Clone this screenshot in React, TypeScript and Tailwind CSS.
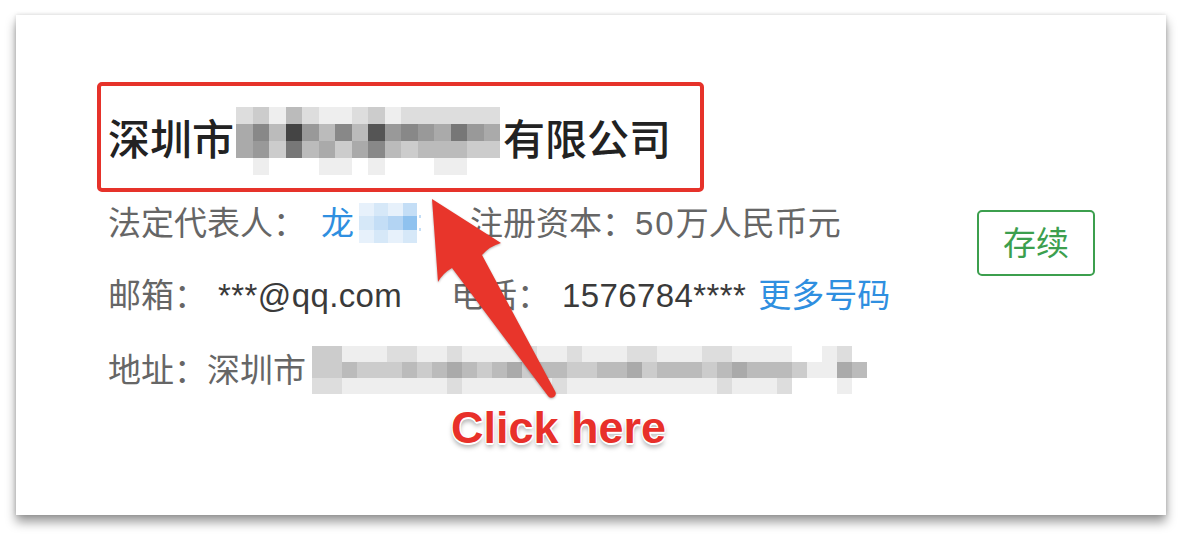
import type { ReactNode } from 'react'

const gray = (c: string) => `#${c.repeat(6)}`

const blue: Record<string, string> = {
  '0': '#e7f1fb',
  '1': '#d6e8f8',
  '2': '#c4def6',
  '3': '#8fc2ef',
  '4': '#b3d4f3',
}

function Mosaic({
  rows,
  cols,
  className,
  color = gray,
}: {
  rows: string[]
  cols: number
  className: string
  color?: (c: string) => string
}) {
  const cells = rows.flatMap((r) => r.padEnd(cols, 'e').slice(0, cols).split(''))
  return (
    <div className={`grid shrink-0 ${className}`}>
      {cells.map((c, i) => (
        <div key={i} style={{ backgroundColor: color(c) }} />
      ))}
    </div>
  )
}

const titleBlur = ['dcebdeedcedddddd', 'a8b49b8b5989a79a', 'a9c7baca8bcbbbcc', 'fefffeefefffeeff']

const addrBlur = [
  'cceeeddeedeeeedeedeeeddeeeddeeeeffedf',
  'ccbcccbcbabcbacbbccbbacbbbcbabbbceeab',
  'ddeeeeeeedeeeeeedeeeeeeeeeedeeedfffef',
]

const nameBlur = ['0102', '1243', '0101']

function Row({ children, className = '' }: { children: ReactNode; className?: string }) {
  return <div className={`flex items-center ${className}`}>{children}</div>
}

export default function App() {
  return (
    <div className="relative w-[1183px] h-[536px] bg-white pt-[15px] pl-[16px] font-['Liberation_Sans','Noto_Sans_CJK_SC',sans-serif]">
      <div className="w-[1150px] h-[500px] bg-white pt-[67px] pl-[81px] shadow-[0_7px_10px_rgba(0,0,0,0.4),0_0_4px_rgba(0,0,0,0.15)]">
        <div className="w-[607px] h-[110px] border-4 border-[#e6322a] rounded-[5px] flex items-center pl-[7px] pt-[8px]">
          <h1 className="flex items-center text-[42px] leading-none font-medium text-[#222]">
            <span>深圳市</span>
            <Mosaic rows={titleBlur} cols={16} className="ml-[2px] mr-[3px] w-[264px] h-[68px] grid-cols-16 grid-rows-4" />
            <span>有限公司</span>
          </h1>
        </div>

        <div className="flex ml-[11px] text-[33px] leading-none text-[#666]">
          <div className="flex flex-col pt-[9px]">
            <Row className="h-[44px]">
              <span>法定代表人：</span>
              <span className="ml-[15px] text-[#2f8fe0]">龙</span>
              <Mosaic
                rows={nameBlur}
                cols={4}
                color={(c) => blue[c]}
                className="ml-[5px] w-[58px] h-[40px] grid-cols-4 grid-rows-3"
              />
              <span className="ml-[2px] flex flex-col gap-[10px]">
                <span className="w-[2px] h-[3px] bg-[#c4def6]" />
                <span className="w-[2px] h-[3px] bg-[#c4def6]" />
              </span>
              <span className="ml-[49px]">
                注册资本：<span className="tracking-[2px]">50</span>万人民币元
              </span>
            </Row>
            <Row className="h-[44px] mt-[28px]">
              <span>邮箱：</span>
              <span className="ml-[11px] w-[233px] text-[#3a3a3a] tracking-[0.4px]">***@qq.com</span>
              <span>电话：</span>
              <span className="ml-[12px] text-[#3a3a3a] tracking-[0.4px]">1576784****</span>
              <span className="ml-[12px] text-[#2f8fe0]">更多号码</span>
            </Row>
            <Row className="h-[48px] mt-[29px]">
              <span>地址：深圳市</span>
              <Mosaic rows={addrBlur} cols={37} className="ml-[6px] w-[555px] h-[48px] grid-cols-37 grid-rows-3" />
            </Row>
          </div>
          <div className="ml-auto mr-[71px] mt-[18px] w-[118px] h-[66px] border-2 border-[#3c9f4e] rounded-[5px] flex items-center justify-center text-[#3c9f4e]">
            存续
          </div>
        </div>
      </div>

      <svg
        className="absolute left-0 top-0 w-[1183px] h-[536px] pointer-events-none drop-shadow-[0_1px_1px_rgba(0,0,0,0.3)]"
        viewBox="0 0 1183 536"
      >
        <path
          d="M432 199 L501 243 Q490 246 482 255 L555 391 A4 4 0 0 1 548 396 L452 268 Q443 273 438 282 Z"
          fill="#e8352b"
        />
      </svg>

      <div className="absolute left-[451px] top-[405px] text-[45px] leading-none font-bold text-[#e8302a] font-['Liberation_Sans',sans-serif] [text-shadow:1px_1px_0_#fff,-1px_-1px_0_#fff,1px_-1px_0_#fff,-1px_1px_0_#fff,0_2px_0_#fff,0_4px_5px_rgba(0,0,0,0.35)]">
        Click here
      </div>
    </div>
  )
}
